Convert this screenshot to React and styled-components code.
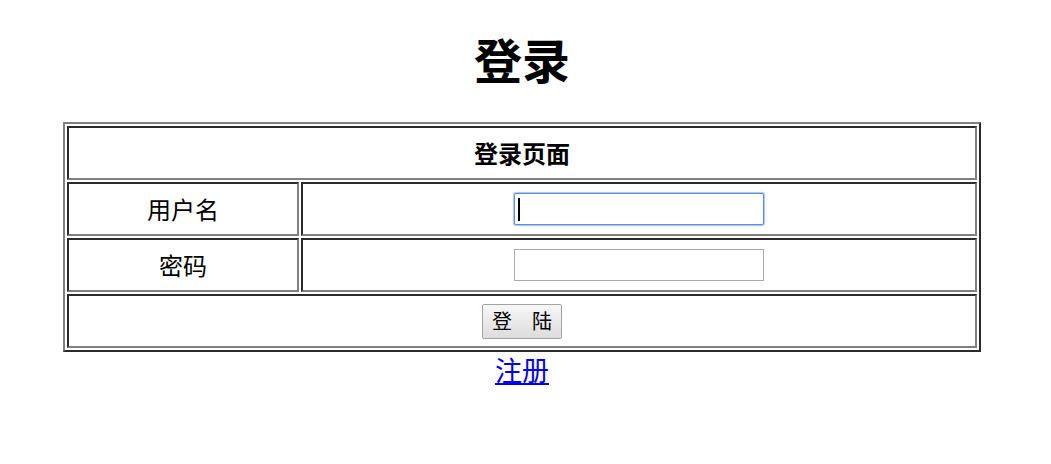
import React from 'react'
import styled, { createGlobalStyle } from 'styled-components'

const GlobalStyle = createGlobalStyle`
    body {
        margin: 8px 15px 8px 8px;
        background: #fff;
        color: #000;
        font-family: "Noto Sans CJK SC", "Noto Sans", sans-serif;
    }
`

const Page = styled.div`
    display: flex;
    flex-direction: column;
    align-items: center;
`

const Title = styled.h1`
    margin: 22px 0 36px;
    font-size: 48px;
    line-height: 56px;
    font-weight: 700;
`

const LoginTable = styled.table`
    width: 918px;
    table-layout: fixed;
    border-collapse: separate;
    border-spacing: 2px;
    border: 2px solid;
    border-color: #808080 #2b2b2b #2b2b2b #808080;
`

const Col = styled.col`
    width: ${p => p.$width || 'auto'};
`

const Row = styled.tr`
    height: 54px;
`

const Cell = styled.td`
    padding: 0;
    border: 2px solid;
    border-color: #2b2b2b #808080 #808080 #2b2b2b;
    text-align: center;
    vertical-align: middle;
    font-size: 24px;
    line-height: 30px;
    font-weight: ${p => (p.$bold ? 700 : 400)};
`

const InputWrap = styled.div`
    position: relative;
    width: 250px;
    margin: 0 auto;
`

const TextInput = styled.input`
    display: block;
    box-sizing: border-box;
    width: 250px;
    height: 32px;
    margin: 0;
    padding: 0 4px;
    font-size: 20px;
    background: #fff;
    border: 1px solid ${p => (p.$focused ? '#5d8fe0' : '#a9a9a9')};
    border-radius: ${p => (p.$focused ? '2px' : '0')};
    box-shadow: ${p => (p.$focused ? '0 0 1px 1px #a9c4ef' : 'none')};
    outline: none;
`

const Caret = styled.span`
    position: absolute;
    left: 4px;
    top: 5px;
    width: 2px;
    height: 23px;
    background: #000;
`

const SubmitButton = styled.button`
    width: 80px;
    height: 35px;
    padding: 0;
    font-family: "Noto Sans CJK SC", sans-serif;
    font-size: 20px;
    line-height: 24px;
    color: #000;
    background: linear-gradient(#f7f7f7, #dcdcdc);
    border: 1px solid #a3a3a3;
    border-radius: 2px;
`

const RegisterLink = styled.a`
    margin-top: 2px;
    font-size: 27px;
    line-height: 32px;
    color: #0000ee;
    text-decoration: underline;
`

export default function App() {
    return (
        <Page>
            <GlobalStyle />
            <Title>登录</Title>
            <LoginTable>
                <colgroup>
                    <Col $width='232px' />
                    <Col />
                </colgroup>
                <tbody>
                    <Row>
                        <Cell colSpan={2} $bold>登录页面</Cell>
                    </Row>
                    <Row>
                        <Cell>用户名</Cell>
                        <Cell>
                            <InputWrap>
                                <TextInput type='text' $focused />
                                <Caret />
                            </InputWrap>
                        </Cell>
                    </Row>
                    <Row>
                        <Cell>密码</Cell>
                        <Cell>
                            <InputWrap>
                                <TextInput type='password' />
                            </InputWrap>
                        </Cell>
                    </Row>
                    <Row>
                        <Cell colSpan={2}>
                            <SubmitButton type='button'>登　陆</SubmitButton>
                        </Cell>
                    </Row>
                </tbody>
            </LoginTable>
            <RegisterLink href='#'>注册</RegisterLink>
        </Page>
    )
}
